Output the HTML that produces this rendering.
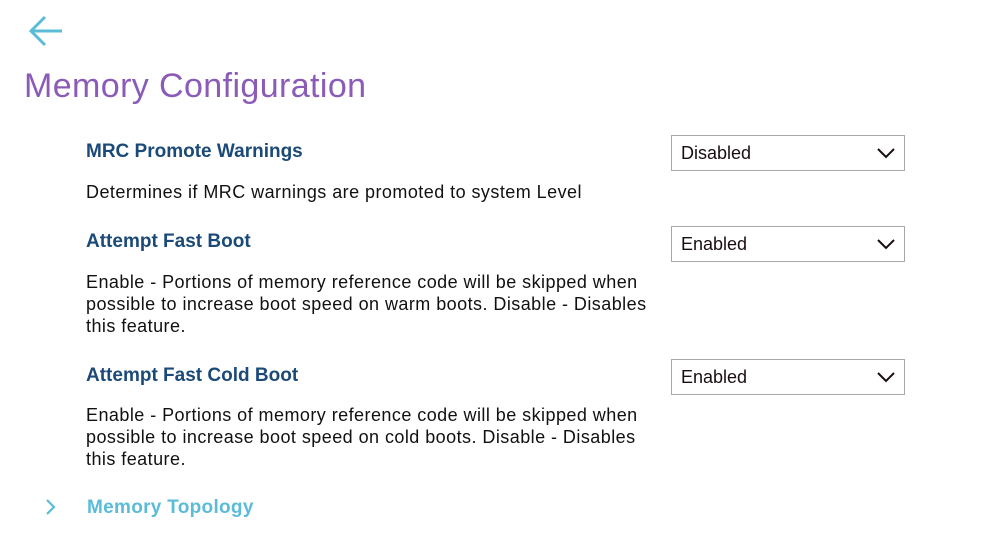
<!DOCTYPE html>
<html><head><style>
body{margin:0;width:989px;height:559px;background:#fff;font-family:"Liberation Sans",sans-serif;position:relative;overflow:hidden}
.a{position:absolute;white-space:nowrap}
.h{font-size:19px;color:#1c4a78;font-weight:bold}
.d{font-size:18px;letter-spacing:0.45px;color:#111;line-height:22px;white-space:normal;width:575px}
.sel{position:absolute;left:671px;width:232px;height:34px;border:1px solid #a8a8a8;font-size:18px;color:#1a0d12}
.sel span{position:absolute;left:9px;top:7px}
.sel svg{position:absolute;right:9px;top:11px}
</style></head><body>
<svg class="a" style="left:27px;top:14px" width="37" height="34" viewBox="0 0 37 34"><path d="M35 17H4M18 3L4 17L18 31" fill="none" stroke="#5bbcd8" stroke-width="3"/></svg>
<div class="a" style="left:24px;top:67px;font-size:34px;letter-spacing:0.4px;color:#8a5cb8">Memory Configuration</div>

<div class="a h" style="left:86px;top:141px">MRC Promote Warnings</div>
<div class="sel" style="top:135px"><span>Disabled</span><svg width="18" height="12" viewBox="0 0 18 12"><path d="M1 2L9 10L17 2" fill="none" stroke="#1a0d12" stroke-width="2"/></svg></div>
<div class="a d" style="left:86px;top:181px">Determines if MRC warnings are promoted to system Level</div>

<div class="a h" style="left:86px;top:231px">Attempt Fast Boot</div>
<div class="sel" style="top:226px"><span>Enabled</span><svg width="18" height="12" viewBox="0 0 18 12"><path d="M1 2L9 10L17 2" fill="none" stroke="#1a0d12" stroke-width="2"/></svg></div>
<div class="a d" style="left:86px;top:271px">Enable - Portions of memory reference code will be skipped when possible to increase boot speed on warm boots. Disable - Disables this feature.</div>

<div class="a h" style="left:86px;top:365px">Attempt Fast Cold Boot</div>
<div class="sel" style="top:359px"><span>Enabled</span><svg width="18" height="12" viewBox="0 0 18 12"><path d="M1 2L9 10L17 2" fill="none" stroke="#1a0d12" stroke-width="2"/></svg></div>
<div class="a d" style="left:86px;top:404px">Enable - Portions of memory reference code will be skipped when possible to increase boot speed on cold boots. Disable - Disables this feature.</div>

<svg class="a" style="left:44px;top:498px" width="14" height="18" viewBox="0 0 14 18"><path d="M3 2L10 9L3 16" fill="none" stroke="#5bbcd8" stroke-width="2.2"/></svg>
<div class="a h" style="left:87px;top:497px;color:#5bbcd8;letter-spacing:0.3px">Memory Topology</div>
</body></html>
